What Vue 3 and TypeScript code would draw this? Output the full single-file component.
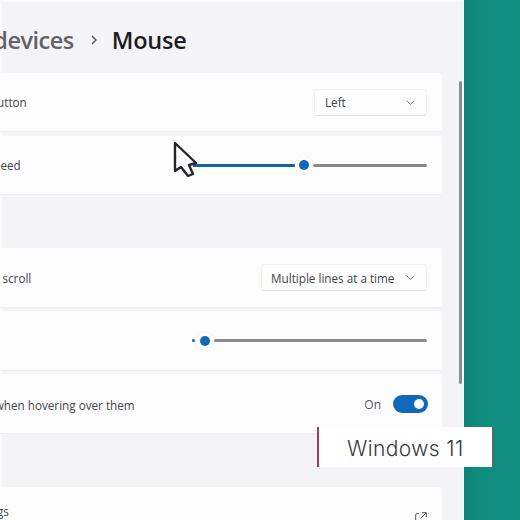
<script setup lang="ts">
const parent = 'Bluetooth & devices'
</script>

<template>
  <div class="screen">
    <main class="window">
      <div class="pane">
        <header class="crumbs">
          <span class="parent">{{ parent }}</span>
          <svg class="sep" width="10" height="12" viewBox="0 0 10 12"><path d="M3 2l4 4-4 4" fill="none" stroke="#55555a" stroke-width="1.4"/></svg>
          <span class="title">Mouse</span>
        </header>

        <section class="group">
          <div class="card">
            <span class="label primary">Primary mouse button</span>
            <div class="select small">
              <span>Left</span>
              <svg width="9" height="5" viewBox="0 0 9 5"><path d="M.7.7l3.800 3.600L8.300.7" fill="none" stroke="#77777c" stroke-width="1"/></svg>
            </div>
          </div>
          <div class="card">
            <span class="label speed">Mouse pointer speed</span>
            <div class="slider first">
              <i class="fill"></i>
              <b class="thumb"></b>
              <i class="rest"></i>
            </div>
          </div>
        </section>

        <section class="group second">
          <div class="card">
            <span class="label wheel">Mouse wheel to scroll</span>
            <div class="select wide">
              <span>Multiple lines at a time</span>
              <svg width="9" height="5" viewBox="0 0 9 5"><path d="M.7.7l3.800 3.600L8.300.7" fill="none" stroke="#77777c" stroke-width="1"/></svg>
            </div>
          </div>
          <div class="card">
            <span class="label">Lines to scroll</span>
            <div class="slider last">
              <i class="dot"></i>
              <b class="thumb"></b>
              <i class="rest"></i>
            </div>
          </div>
          <div class="card">
            <span class="label hover">Scroll windows when hovering over them</span>
            <div class="toggle-wrap">
              <span class="on">On</span>
              <span class="toggle"><i></i></span>
            </div>
          </div>
        </section>

        <section class="group third">
          <div class="card tail">
            <span class="label more">Additional settings</span>
            <svg class="ext" width="12" height="13" viewBox="0 0 12 13"><path d="M4 1.500H2.200A1.500 1.500 0 0 0 .7 3V10.800A1.500 1.500 0 0 0 2.200 12.300H9.300A1.500 1.500 0 0 0 10.800 10.800V9M7 .7h4.300V5M11.300 .7L5.500 6.500" fill="none" stroke="#55555a" stroke-width="1"/></svg>
          </div>
        </section>
      </div>
      <div class="scrollbar"></div>
    </main>
    <aside class="wall"></aside>

    <svg class="cursor" width="26" height="38" viewBox="0 0 26 38">
      <path d="M2 2V30L8 26L15 35L20 33L16 24L23 22Z" fill="#fff" stroke="#26262a" stroke-width="2.400" stroke-linejoin="round"/>
    </svg>

    <div class="caption">Windows 11</div>
  </div>
</template>

<style>
html, body { margin: 0; background: #f4f3f6; }
</style>

<style scoped>
.screen {
  position: relative;
  display: flex;
  width: 520px;
  height: 520px;
  overflow: hidden;
  font-family: "Open Sans", "Noto Sans", sans-serif;
  color: #3d3d40;
}
.window {
  position: relative;
  width: 464px;
  flex: none;
  overflow: hidden;
  background: #f4f3f6;
  border-right: 1px solid #f9f9fa;
  box-shadow: inset 2px 2px 0 #fafafb;
  box-sizing: border-box;
}
.wall {
  flex: 1;
  background: linear-gradient(90deg, #0d8478 0, #0f8b7e 14px, #118e81 40px, #118d80 100%);
}
.pane {
  width: 622px;
  margin-left: -180px;
}
.crumbs {
  display: flex;
  align-items: center;
  height: 73px;
  padding-top: 6px;
  box-sizing: border-box;
  margin-left: 37px;
}
.parent {
  font-size: 23.500px;
  font-weight: 600;
  color: #636367;
  white-space: nowrap;
  letter-spacing: -0.5px;
}
.sep { margin: 0 13px 0 15px; }
.title {
  font-size: 23.500px;
  font-weight: 600;
  color: #1c1c1f;
  letter-spacing: -0.2px;
}
.group { display: flex; flex-direction: column; gap: 5px; }
.second { margin-top: 54px; gap: 4px; }
.second .card { height: 59px; }
.third { margin-top: 54px; }
.card {
  display: flex;
  align-items: center;
  justify-content: space-between;
  height: 58px;
  padding: 0 15px 0 91px;
  background: #fdfdfe;
  border-radius: 0 3px 3px 0;
  box-shadow: 0 1px 0 #efeff1;
}
.label {
  font-size: 11.700px;
  white-space: nowrap;
  color: #454548;
}
.primary { margin-left: -7px; }
.speed { margin-left: -6px; }
.wheel { margin-left: 2px; }
.hover { padding-top: 2px; }
.more { margin-left: -3px; }
.select {
  display: flex;
  align-items: center;
  justify-content: space-between;
  height: 27px;
  padding: 0 11px 0 10px;
  box-sizing: border-box;
  font-size: 11.700px;
  color: #444448;
  background: #fefefe;
  border: 1px solid #f1f1f3;
  border-bottom-color: #e3e3e6;
  border-radius: 3px;
}
.small { width: 113px; }
.wide { width: 166px; padding-left: 9px; }
.slider {
  display: flex;
  align-items: center;
}
.slider .fill { display: block; width: 106px; height: 3px; background: #0f62aa; }
.slider .rest { display: block; height: 3px; background: #8c8a8e; border-radius: 2px; }
.first .rest { width: 114px; margin-left: 4px; }
.last .rest { width: 213px; margin-left: 4px; }
.slider .dot {
  position: relative;
  z-index: 1;
  display: block;
  width: 3px;
  height: 3px;
  border-radius: 50%;
  background: #0f62aa;
  margin-right: 5px;
}
.thumb {
  display: block;
  width: 10px;
  height: 10px;
  border-radius: 50%;
  background: #0f68ba;
  box-shadow: 0 0 0 4px #fff, 0 0 2px 4px #e6e6e9;
}
.toggle-wrap { display: flex; align-items: center; gap: 12px; margin-right: -1px; }
.on { font-size: 12px; color: #55555a; padding-top: 2px; }
.toggle {
  display: flex;
  align-items: center;
  justify-content: flex-end;
  width: 35px;
  height: 18px;
  padding-right: 4px;
  box-sizing: border-box;
  border-radius: 9px;
  background: #0f68ba;
}
.toggle i { display: block; width: 10px; height: 10px; border-radius: 50%; background: #fff; }
.tail { align-items: flex-start; padding-top: 16px; box-sizing: border-box; }
.ext { margin-top: 9px; }
.scrollbar {
  position: absolute;
  left: 459px;
  top: 81px;
  width: 3px;
  height: 303px;
  border-radius: 2px;
  background: #8f8c91;
}
.cursor {
  position: absolute;
  left: 173px;
  top: 141px;
}
.caption {
  position: absolute;
  left: 317px;
  top: 427px;
  width: 176px;
  height: 40px;
  box-sizing: border-box;
  padding-left: 28px;
  line-height: 43px;
  background: #fff;
  border-left: 2px solid #a23a5c;
  border-right: 1px solid #7a5a68;
  font-family: Inter, sans-serif;
  font-weight: 300;
  font-size: 21px;
  letter-spacing: 0.400px;
  color: #3a3a3e;
  white-space: nowrap;
}
</style>
